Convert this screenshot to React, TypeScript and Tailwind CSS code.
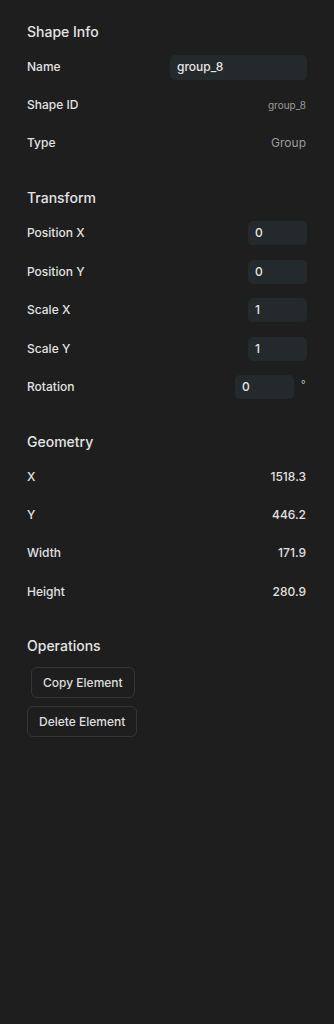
import type { ReactNode } from "react"

const font = { fontFamily: "Inter, 'Noto Sans', sans-serif" }

function Heading({ children }: { children: ReactNode }) {
  return <h2 className="h-[20px] text-[14px] leading-[20px] font-medium text-[#e4e4e4]">{children}</h2>
}

function Row({ label, h, children }: { label: string; h: string; children?: ReactNode }) {
  return (
    <div className={`flex items-center justify-between ${h}`}>
      <span className="text-[12px] font-medium text-[#e2e2e2]">{label}</span>
      {children}
    </div>
  )
}

function NumInput({ value }: { value: string }) {
  return (
    <div className="w-[59px] h-[24px] rounded-[5px] bg-[#242a2b] pl-[7px] flex items-center text-[12px] font-medium text-[#e6e6e6]">
      {value}
    </div>
  )
}

export default function App() {
  const geometry = [
    ["X", "1518.3"],
    ["Y", "446.2"],
    ["Width", "171.9"],
    ["Height", "280.9"],
  ]

  return (
    <div className="min-h-[1024px] w-[334px] bg-[#1e1e1e] pl-[27px] pr-[27px] pt-[22px]" style={font}>
      <section>
        <Heading>Shape Info</Heading>
        <div className="mt-[6px]">
          <Row label="Name" h="h-[38px]">
            <div className="w-[137px] h-[25px] rounded-[5px] bg-[#242a2b] pl-[7px] flex items-center text-[12px] font-medium text-[#e6e6e6]">
              group_8
            </div>
          </Row>
          <Row label="Shape ID" h="h-[38px]">
            <span className="text-[10px] text-[#9a9a9a] pr-[1px]">group_8</span>
          </Row>
          <Row label="Type" h="h-[38px]">
            <span className="text-[12px] text-[#9c9c9c] pr-[1px]">Group</span>
          </Row>
        </div>
      </section>

      <section className="mt-[26px]">
        <Heading>Transform</Heading>
        <div className="mt-[6px]">
          <Row label="Position X" h="h-[38.5px]"><NumInput value="0" /></Row>
          <Row label="Position Y" h="h-[38.5px]"><NumInput value="0" /></Row>
          <Row label="Scale X" h="h-[38.5px]"><NumInput value="1" /></Row>
          <Row label="Scale Y" h="h-[38.5px]"><NumInput value="1" /></Row>
          <Row label="Rotation" h="h-[38.5px]">
            <div className="flex items-center gap-[7px]">
              <NumInput value="0" />
              <span className="w-[6px] text-[10px] leading-none text-[#bdbdbd] -mt-[6px]">°</span>
            </div>
          </Row>
        </div>
      </section>

      <section className="mt-[25px]">
        <Heading>Geometry</Heading>
        <div className="mt-[6px]">
          {geometry.map(([label, value]) => (
            <Row key={label} label={label} h="h-[38.4px]">
              <span className="text-[12px] font-medium text-[#e2e2e2] pr-[1px]">{value}</span>
            </Row>
          ))}
        </div>
      </section>

      <section className="mt-[25px]">
        <Heading>Operations</Heading>
        <div className="mt-[11px] flex flex-col items-start gap-[8px]">
          <button className="ml-[4px] h-[31px] px-[11px] rounded-[6px] border border-[#353535] text-[12px] font-medium text-[#dedede]">
            Copy Element
          </button>
          <button className="h-[31px] px-[11px] rounded-[6px] border border-[#353535] text-[12px] font-medium text-[#dedede]">
            Delete Element
          </button>
        </div>
      </section>
    </div>
  )
}
